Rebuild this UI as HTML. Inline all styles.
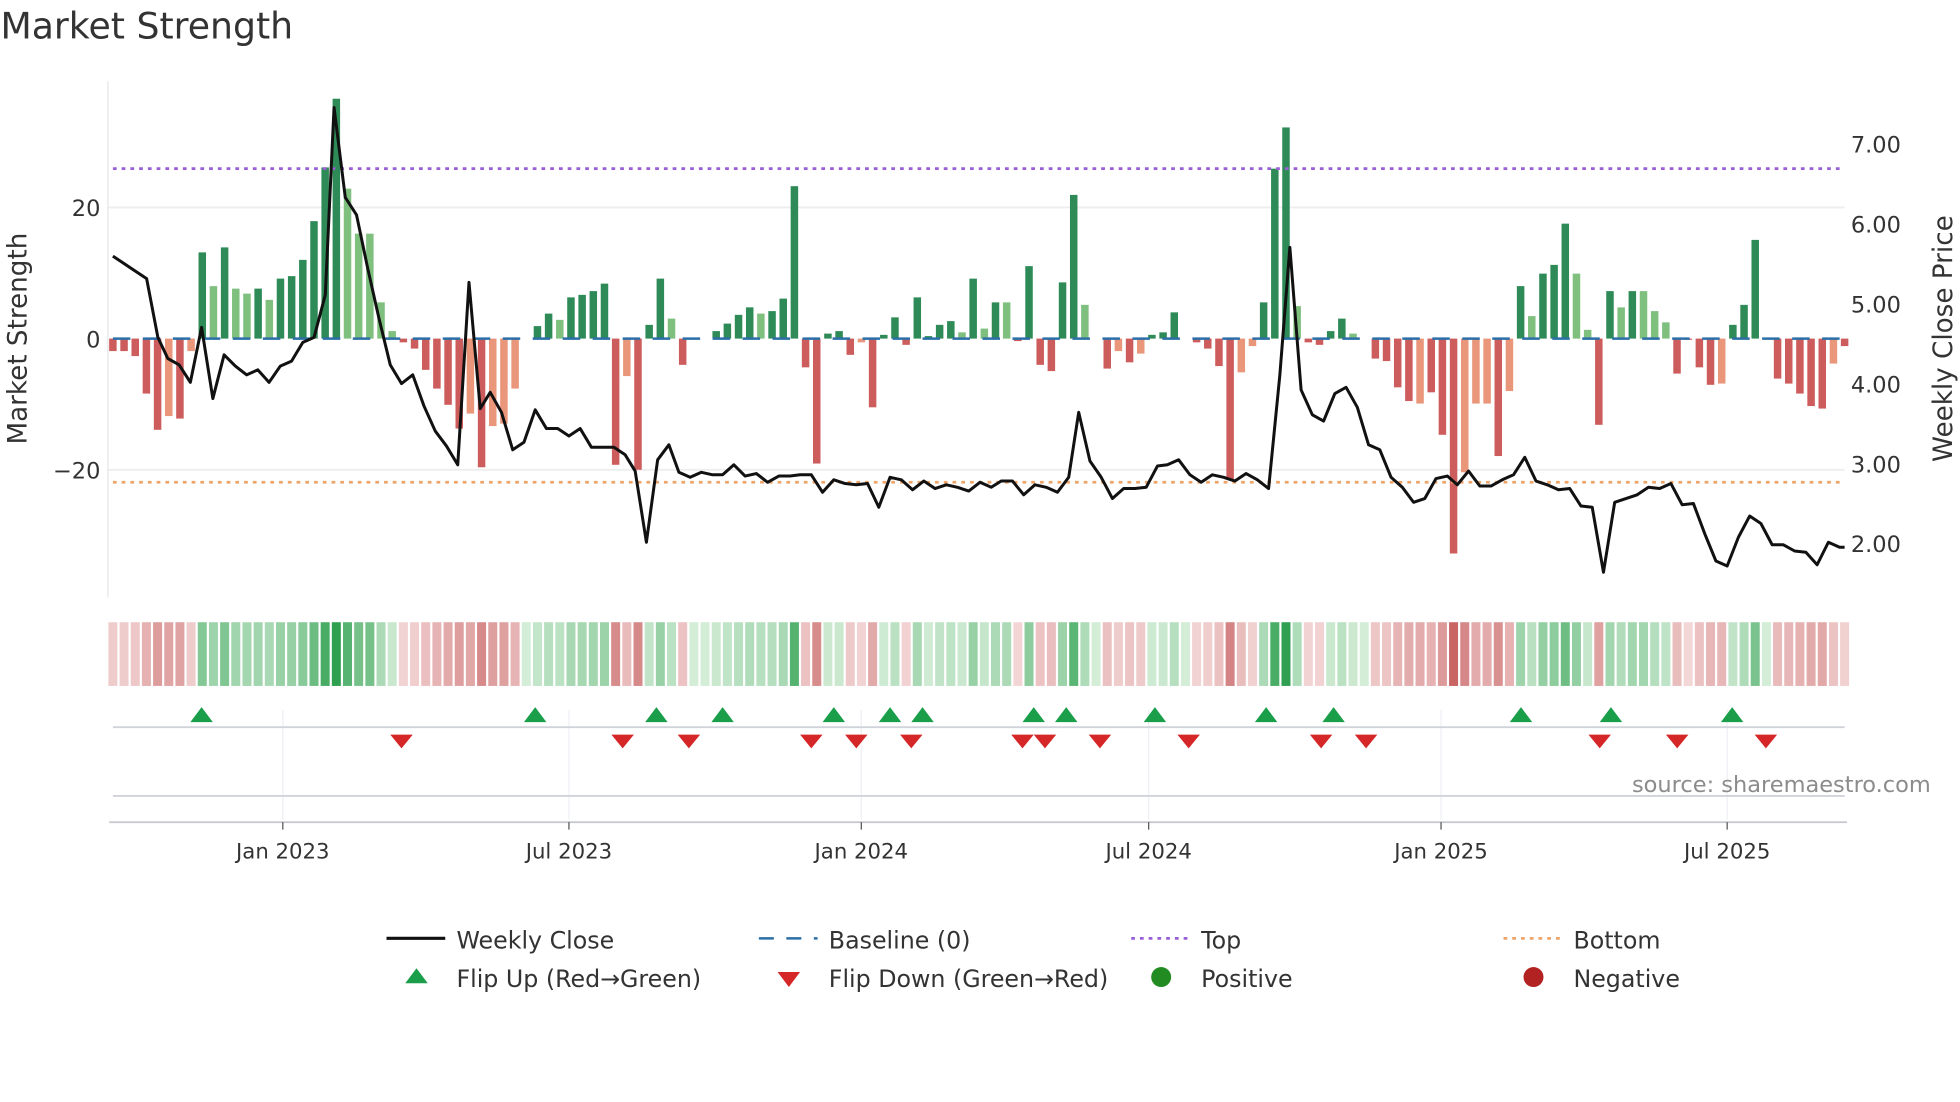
<!DOCTYPE html>
<html><head><meta charset="utf-8">
<style>
html,body{margin:0;padding:0;background:#fff;}
svg{display:block;font-family:"DejaVu Sans","Liberation Sans",sans-serif;}
</style></head>
<body>
<svg id="s" width="1960" height="1102" viewBox="0 0 1568 882" xmlns="http://www.w3.org/2000/svg">
<rect width="1568" height="882" fill="#fff"/>
<text x="0" y="31" font-size="29" fill="#333">Market Strength</text>
<line x1="86" y1="166" x2="1476" y2="166" stroke="#eee" stroke-width="1.5"/>
<line x1="86" y1="376" x2="1476" y2="376" stroke="#eee" stroke-width="1.5"/>
<line x1="86" y1="65" x2="86" y2="478" stroke="#e6e6e6" stroke-width="1"/>
<g id="bars"></g>
<line x1="90" y1="271" x2="1476" y2="271" stroke="#2b6ea8" stroke-width="2" stroke-dasharray="14,10"/>
<line x1="90" y1="135" x2="1476" y2="135" stroke="#9a5fd6" stroke-width="2.2" stroke-dasharray="3,4"/>
<line x1="90" y1="386" x2="1476" y2="386" stroke="#eda56a" stroke-width="2.2" stroke-dasharray="3,4"/>
<polyline id="price" fill="none" stroke="#111" stroke-width="2.4" stroke-linejoin="round"/>
<g font-size="18" fill="#333">
<text x="80" y="173" text-anchor="end">20</text>
<text x="80" y="278" text-anchor="end">0</text>
<text x="80" y="383" text-anchor="end">−20</text>
<text x="1481" y="122">7.00</text>
<text x="1481" y="186">6.00</text>
<text x="1481" y="250">5.00</text>
<text x="1481" y="314">4.00</text>
<text x="1481" y="378">3.00</text>
<text x="1481" y="442">2.00</text>
</g>
<text transform="translate(21,271) rotate(-90)" font-size="21" fill="#333" text-anchor="middle">Market Strength</text>
<text transform="translate(1562,271) rotate(-90)" font-size="21" fill="#333" text-anchor="middle">Weekly Close Price</text>
<g id="heat"></g>
<g stroke="#eef0f4" stroke-width="1">
<line x1="226" y1="568" x2="226" y2="656"/><line x1="455" y1="568" x2="455" y2="656"/><line x1="689" y1="568" x2="689" y2="656"/><line x1="919" y1="568" x2="919" y2="656"/><line x1="1153" y1="568" x2="1153" y2="656"/><line x1="1382" y1="568" x2="1382" y2="656"/>
</g>
<line x1="90" y1="582" x2="1476" y2="582" stroke="#d0d3da" stroke-width="1.5"/>
<line x1="90" y1="637" x2="1476" y2="637" stroke="#d0d3da" stroke-width="1.5"/>
<line x1="87" y1="658" x2="1478" y2="658" stroke="#c8cad0" stroke-width="1.5"/>
<g id="marks"></g>
<text x="1545" y="634" font-size="18" fill="#8c8c8c" text-anchor="end">source: sharemaestro.com</text>
<g stroke="#555" stroke-width="1"><line x1="226" y1="658" x2="226" y2="664"/><line x1="455" y1="658" x2="455" y2="664"/><line x1="689" y1="658" x2="689" y2="664"/><line x1="919" y1="658" x2="919" y2="664"/><line x1="1153" y1="658" x2="1153" y2="664"/><line x1="1382" y1="658" x2="1382" y2="664"/></g>
<g font-size="17" fill="#333" text-anchor="middle">
<text x="226" y="687">Jan 2023</text><text x="455" y="687">Jul 2023</text><text x="689" y="687">Jan 2024</text><text x="919" y="687">Jul 2024</text><text x="1153" y="687">Jan 2025</text><text x="1382" y="687">Jul 2025</text>
</g>
<g font-size="19" fill="#333">
<line x1="309" y1="751" x2="356" y2="751" stroke="#111" stroke-width="2.5"/>
<text x="365" y="759">Weekly Close</text>
<line x1="607" y1="751" x2="654" y2="751" stroke="#2b6ea8" stroke-width="2" stroke-dasharray="12,10"/>
<text x="663" y="759">Baseline (0)</text>
<line x1="905" y1="751" x2="952" y2="751" stroke="#9a5fd6" stroke-width="2.2" stroke-dasharray="3,4"/>
<text x="961" y="759">Top</text>
<line x1="1203" y1="751" x2="1250" y2="751" stroke="#eda56a" stroke-width="2.2" stroke-dasharray="3,4"/>
<text x="1259" y="759">Bottom</text>
<polygon points="324,787 333,775 342,787" fill="#1a9e4a"/>
<text x="365" y="790">Flip Up (Red→Green)</text>
<polygon points="622,778 640,778 631,790" fill="#d62728"/>
<text x="663" y="790">Flip Down (Green→Red)</text>
<circle cx="929" cy="782" r="8" fill="#228b22"/>
<text x="961" y="790">Positive</text>
<circle cx="1227" cy="782" r="8" fill="#b22222"/>
<text x="1259" y="790">Negative</text>
</g>
</svg>
<script>
var NS="http://www.w3.org/2000/svg";
function el(t,a,p){var e=document.createElementNS(NS,t);for(var k in a)e.setAttribute(k,a[k]);p.appendChild(e);return e;}
var B=[[-10,'r'],[-10,'r'],[-14,'r'],[-44,'r'],[-73,'r'],[-62,'o'],[-64,'r'],[-10,'o'],[69,'d'],[42,'l'],[73,'d'],[40,'l'],[36,'l'],[40,'d'],[31,'l'],[48,'d'],[50,'d'],[63,'d'],[94,'d'],[137,'d'],[192,'d'],[120,'l'],[84,'l'],[84,'l'],[29,'l'],[6,'l'],[-3,'r'],[-8,'r'],[-25,'r'],[-40,'r'],[-53,'r'],[-72,'r'],[-60,'o'],[-103,'r'],[-70,'o'],[-68,'o'],[-40,'o'],[0,'d'],[10,'d'],[20,'d'],[15,'l'],[33,'d'],[35,'d'],[38,'d'],[44,'d'],[-101,'r'],[-30,'o'],[-105,'r'],[11,'d'],[48,'d'],[16,'l'],[-21,'r'],[0,'d'],[0,'d'],[6,'d'],[12,'d'],[19,'d'],[25,'d'],[20,'l'],[22,'d'],[32,'d'],[122,'d'],[-23,'r'],[-100,'r'],[4,'d'],[6,'d'],[-13,'r'],[-3,'o'],[-55,'r'],[3,'d'],[17,'d'],[-5,'r'],[33,'d'],[2,'d'],[11,'d'],[14,'d'],[5,'l'],[48,'d'],[8,'l'],[29,'d'],[29,'l'],[-2,'r'],[58,'d'],[-21,'r'],[-26,'r'],[45,'d'],[115,'d'],[27,'l'],[0,'d'],[-24,'r'],[-10,'o'],[-19,'r'],[-12,'o'],[3,'d'],[5,'d'],[21,'d'],[0,'d'],[-3,'r'],[-8,'r'],[-22,'r'],[-113,'r'],[-27,'o'],[-6,'o'],[29,'d'],[136,'d'],[169,'d'],[26,'l'],[-3,'r'],[-5,'r'],[6,'d'],[16,'d'],[4,'l'],[0,'d'],[-16,'r'],[-18,'r'],[-39,'r'],[-50,'r'],[-52,'o'],[-43,'r'],[-77,'r'],[-172,'r'],[-107,'o'],[-52,'o'],[-52,'o'],[-94,'r'],[-42,'o'],[42,'d'],[18,'l'],[52,'d'],[59,'d'],[92,'d'],[52,'l'],[7,'l'],[-69,'r'],[38,'d'],[25,'l'],[38,'d'],[38,'l'],[22,'l'],[13,'l'],[-28,'r'],[-1,'r'],[-23,'r'],[-37,'r'],[-36,'o'],[11,'d'],[27,'d'],[79,'d'],[0,'d'],[-32,'r'],[-36,'r'],[-44,'r'],[-54,'r'],[-56,'r'],[-20,'o'],[-6,'r']];
var C={d:'#2e8b57',l:'#7fc07f',r:'#cd5c5c',o:'#e9967a'};
var g=document.getElementById('bars'),h=document.getElementById('heat');
var step=(1476-90)/(B.length-1);
function mix(a,b,t){var r=[];for(var i=0;i<3;i++)r.push(Math.round(a[i]+(b[i]-a[i])*t));return 'rgb('+r.join(',')+')';}
B.forEach(function(b,i){var x=90+i*step,v=b[0];
 if(v!==0)el('rect',{x:x-3,y:v>0?271-v:271,width:6,height:Math.abs(v),fill:C[b[1]]},g);
 var t=Math.min(1,Math.abs(v)/170),col;
 if(v>=0)col=mix([212,237,215],[46,160,80],Math.pow(t,0.8));else col=mix([244,216,216],[200,100,100],Math.pow(t,0.8));
 el('rect',{x:x-3.6,y:498,width:7.2,height:51,fill:col},h);
});
var P=[[90,205],[117,223],[126,270],[134,287],[143,292],[152,306],[161,262],[170,319],[179,284],[188,293],[197,300],[206,296],[215,306],[224,293],[233,289],[242,274],[251,270],[260,236],[267,86],[276,158],[285,172],[294,215],[303,255],[312,292],[321,307],[330,300],[339,325],[348,345],[357,357],[366,372],[375,226],[384,327],[392,314],[401,330],[410,360],[419,354],[428,328],[437,343],[446,343],[455,349],[464,343],[473,358],[482,358],[491,358],[500,364],[508,377],[517,434],[526,368],[535,356],[543,378],[552,382],[561,378],[570,380],[578,380],[587,372],[596,381],[605,379],[614,386],[623,381],[632,381],[640,380],[649,380],[658,394],[667,384],[676,387],[685,388],[694,387],[703,406],[712,382],[721,384],[730,392],[739,385],[748,391],[757,388],[766,390],[775,393],[784,386],[793,390],[801,385],[810,385],[819,396],[828,388],[837,390],[846,394],[855,382],[863,330],[872,369],[881,382],[890,399],[899,391],[908,391],[917,390],[926,373],[934,372],[943,368],[952,380],[961,386],[970,380],[979,382],[988,385],[997,379],[1006,384],[1015,391],[1024,300],[1032,198],[1041,312],[1050,332],[1059,337],[1068,315],[1077,310],[1086,326],[1095,356],[1104,360],[1113,382],[1122,390],[1131,402],[1140,399],[1149,383],[1158,381],[1166,388],[1175,377],[1184,389],[1193,389],[1202,384],[1211,380],[1220,366],[1229,385],[1238,388],[1247,392],[1256,391],[1265,405],[1274,406],[1283,458],[1292,402],[1301,399],[1310,396],[1319,390],[1328,391],[1337,387],[1346,404],[1355,403],[1364,427],[1373,449],[1382,453],[1391,430],[1400,413],[1409,419],[1418,436],[1427,436],[1436,441],[1445,442],[1454,452],[1463,434],[1472,438],[1476,438]];
document.getElementById('price').setAttribute('points',P.map(function(p){return p.join(',')}).join(' '));
var m=document.getElementById('marks');
[161,428,525,578,667,712,738,827,853,924,1013,1067,1217,1289,1386].forEach(function(x){el('polygon',{points:(x-9)+',578 '+x+',566 '+(x+9)+',578',fill:'#1a9e4a'},m);});
[321,498,551,649,685,729,818,836,880,951,1057,1093,1280,1342,1413].forEach(function(x){el('polygon',{points:(x-9)+',588 '+(x+9)+',588 '+x+',599',fill:'#d62728'},m);});
</script>
</body></html>
